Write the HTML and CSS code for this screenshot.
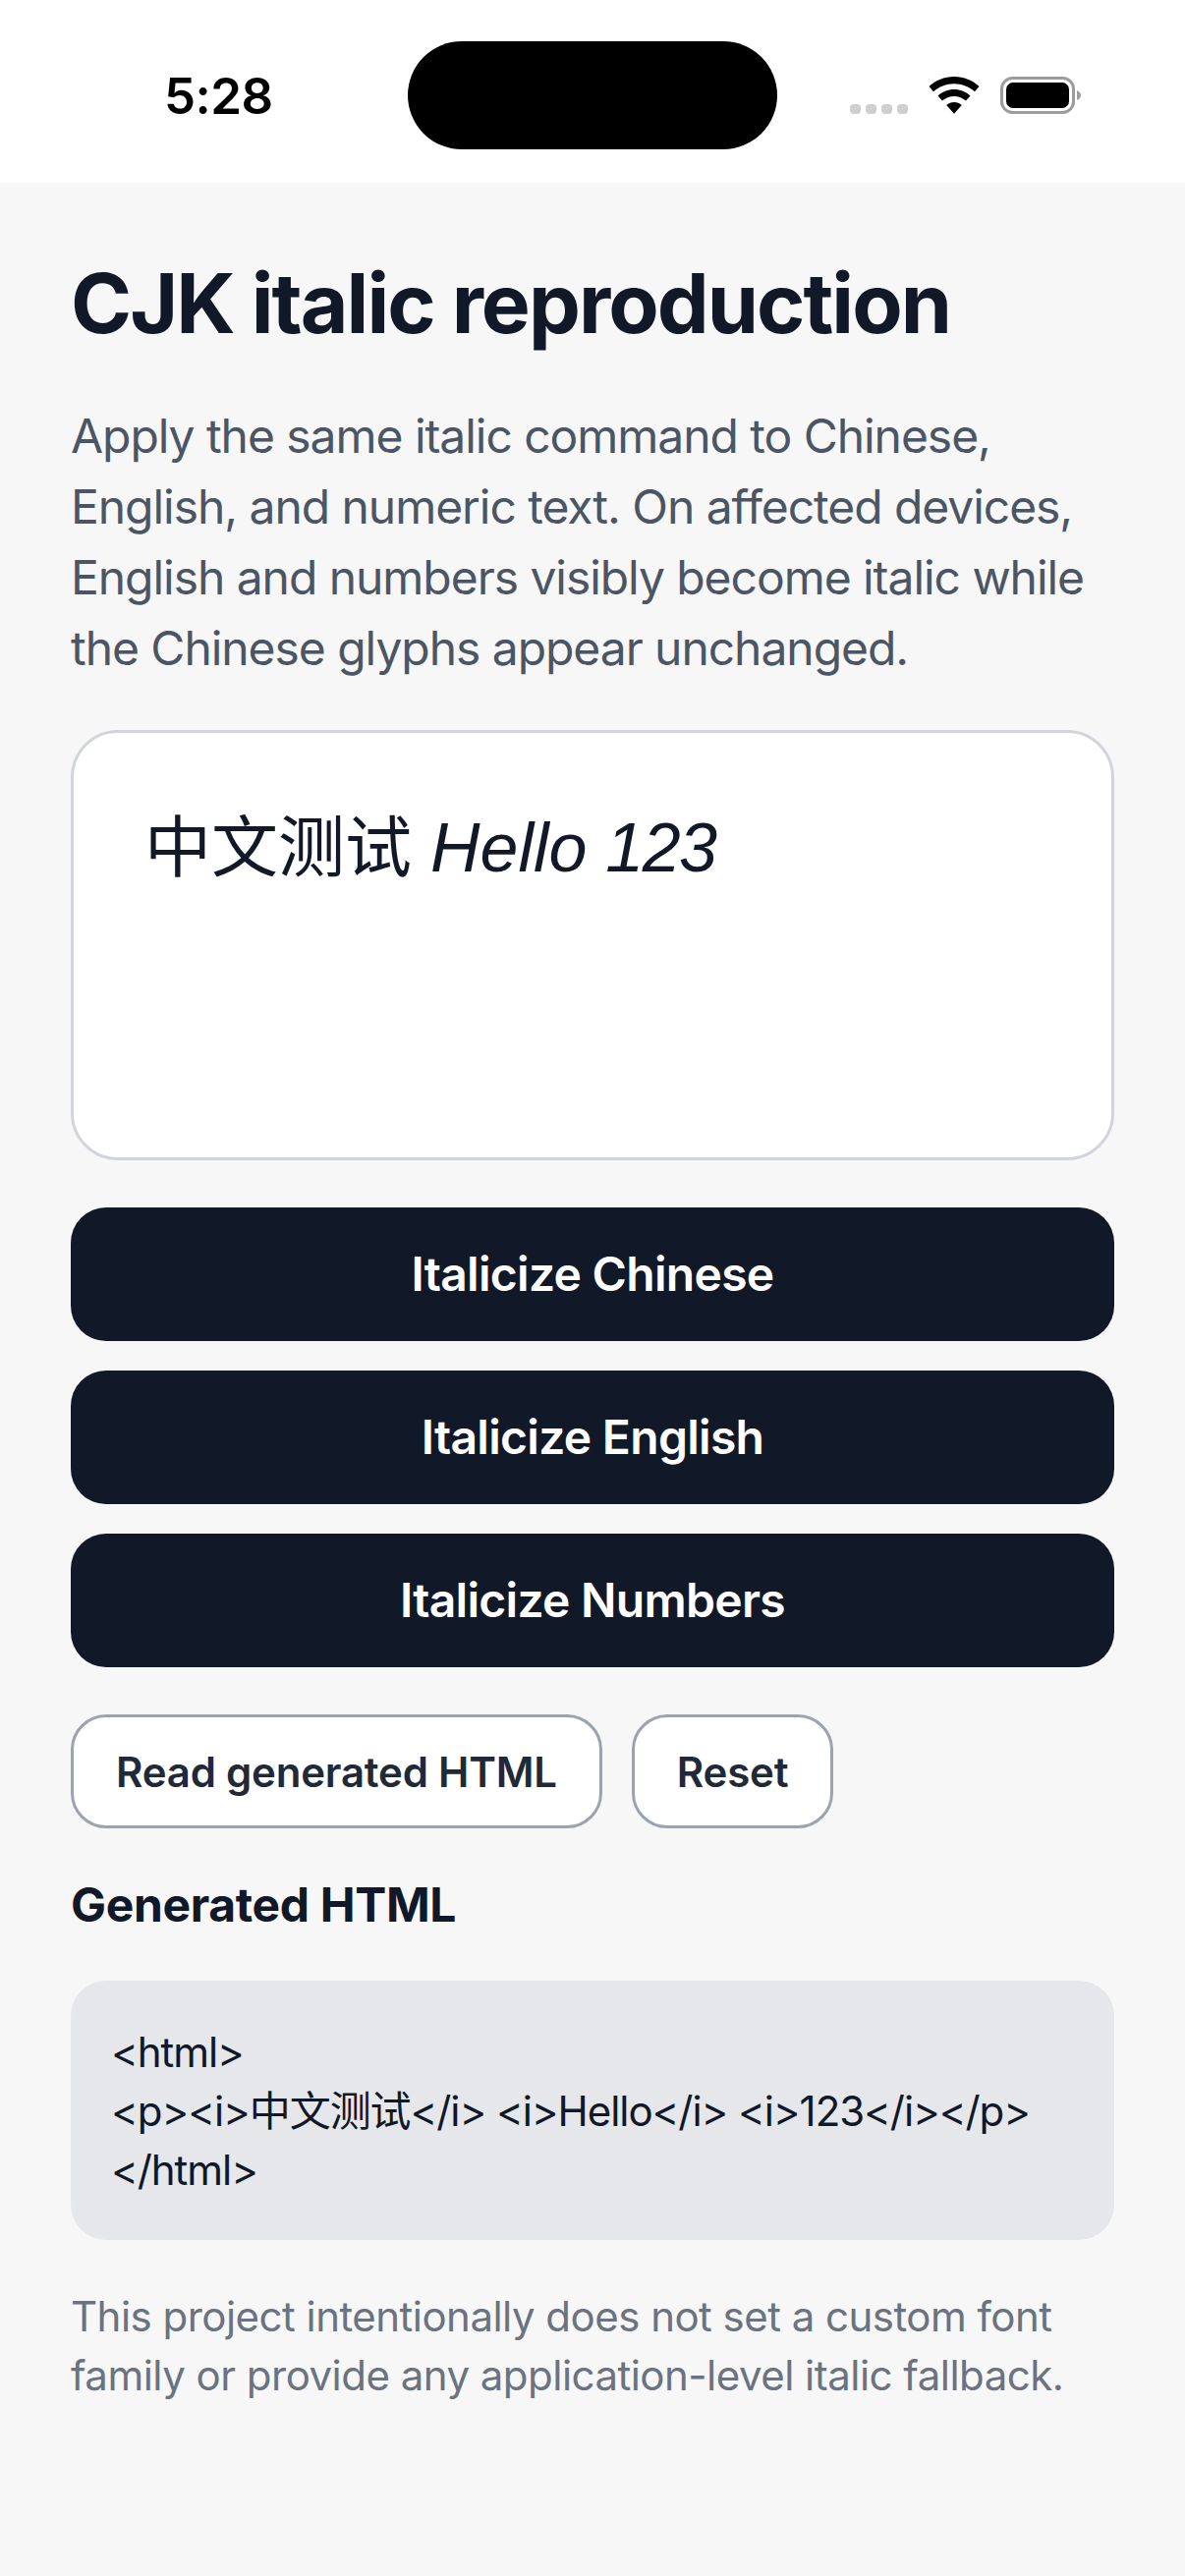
FILE: index.html
```html
<!DOCTYPE html>
<html lang="en">
<head>
<meta charset="utf-8">
<title>CJK italic reproduction</title>
<link rel="stylesheet" href="styles.css">
</head>
<body>
<header class="status-bar">
  <span class="time">5:28</span>
  <div class="island"></div>
  <div class="status-icons">
    <div class="signal"><i></i><i></i><i></i><i></i></div>
    <svg class="wifi" viewBox="0 0 52 38" width="52" height="38"><path d="M26 0C16 0 7.300 3.700 0.500 10L5 15.200C10.500 10.300 18 7.200 26 7.200S41.500 10.300 47 15.200L51.500 10C44.700 3.700 36 0 26 0Z"/><path d="M26 13C19.600 13 13.900 15.400 9.500 19.500L14 24.600C17.200 21.700 21.400 20 26 20S34.800 21.700 38 24.600L42.500 19.500C38.100 15.400 32.400 13 26 13Z"/><path d="M26 26C23 26 20.300 27.100 18.200 29L26 37.700L33.800 29C31.700 27.100 29 26 26 26Z"/></svg>
    <svg class="battery" viewBox="0 0 82 38" width="82" height="38"><rect x="1.500" y="1.500" width="73" height="35" rx="11" fill="none" stroke="#9c9c9c" stroke-width="3"/><rect x="6" y="6" width="64" height="26" rx="7"/><path d="M78 14C80.500 15 82 17 82 19S80.500 23 78 24Z" fill="#9c9c9c"/></svg>
  </div>
</header>
<main class="page">
  <h1 class="title">CJK italic reproduction</h1>
  <p class="intro">Apply the same italic command to Chinese, English, and numeric text. On affected devices, English and numbers visibly become italic while the Chinese glyphs appear unchanged.</p>
  <div class="editor"><span class="cjk">中文测试</span> <em class="slant">Hello</em> <em class="slant digits">123</em></div>
  <div class="actions">
    <button class="btn-primary">Italicize Chinese</button>
    <button class="btn-primary">Italicize English</button>
    <button class="btn-primary">Italicize Numbers</button>
  </div>
  <div class="secondary-row">
    <button class="btn-secondary">Read generated HTML</button>
    <button class="btn-secondary">Reset</button>
  </div>
  <h2 class="section-title">Generated HTML</h2>
  <pre class="code">&lt;html&gt;
&lt;p&gt;&lt;i&gt;中文测试&lt;/i&gt; &lt;i&gt;Hello&lt;/i&gt; &lt;i&gt;123&lt;/i&gt;&lt;/p&gt;
&lt;/html&gt;</pre>
  <p class="note">This project intentionally does not set a custom font family or provide any application-level italic fallback.</p>
</main>
</body>
</html>
```
FILE: styles.css
```css
* { box-sizing: border-box; }
html, body { margin: 0; padding: 0; }
body {
  width: 1206px;
  height: 2622px;
  overflow: hidden;
  background: #f7f7f8;
  color: #111827;
  font-family: Inter, "Noto Sans CJK SC", sans-serif;
}
.status-bar {
  position: relative;
  height: 186px;
  background: #fff;
  display: flex;
  align-items: center;
  justify-content: space-between;
  padding: 0 106px 0 167px;
}
.time {
  font-size: 51px;
  font-weight: 600;
  letter-spacing: -0.5px;
  color: #000;
  line-height: 1;
  margin-top: 8px;
}
.island {
  position: absolute;
  left: 415px;
  top: 42px;
  width: 376px;
  height: 110px;
  border-radius: 55px;
  background: #000;
}
.status-icons { display: flex; align-items: flex-end; gap: 21px; margin-top: 8px; }
.signal { display: flex; gap: 5px; }
.signal i { width: 11px; height: 10px; border-radius: 4px; background: #cfcfcf; }
.wifi, .battery { display: block; }
.page { padding: 72px 72px 0; }
.title {
  margin: 0;
  font-size: 84px;
  line-height: 102px;
  font-weight: 700;
  letter-spacing: -1.95px;
}
.intro {
  margin: 48px 0 0;
  font-size: 48px;
  line-height: 72px;
  letter-spacing: -1.05px;
  color: #4b5563;
}
.editor {
  margin-top: 47px;
  height: 438px;
  background: #fff;
  border: 3px solid #d1d5db;
  border-radius: 48px;
  padding: 72px 72px 0;
  font-size: 68px;
  line-height: 80px;
  font-family: "Liberation Sans", "Noto Sans CJK SC", sans-serif;
}
.cjk { font-family: "Noto Sans CJK SC", sans-serif; font-weight: 400; }
.slant { font-style: italic; font-size: 70px; }
.digits { letter-spacing: -1.6px; }
.actions { margin-top: 48px; display: flex; flex-direction: column; gap: 30px; }
.btn-primary {
  height: 136px;
  border: 0;
  border-radius: 36px;
  background: #111827;
  color: #fff;
  font: 600 48px Inter, sans-serif;
  letter-spacing: -0.7px;
  padding: 0 0 2px;
}
.secondary-row { margin-top: 48px; display: flex; gap: 30px; }
.btn-secondary {
  height: 116px;
  padding: 0 43px;
  border: 3px solid #9ca3af;
  border-radius: 36px;
  background: #fff;
  color: #1f2937;
  font: 600 42px Inter, sans-serif;
  letter-spacing: -0.2px;
}
.section-title {
  margin: 42px 0 0;
  font-size: 48px;
  line-height: 72px;
  font-weight: 700;
  letter-spacing: -0.35px;
}
.code {
  margin: 41px 0 0;
  padding: 43px 42px 41px 41px;
  height: 264px;
  background: #e5e7eb;
  border-radius: 36px;
  font: 400 42px/60px Inter, "Noto Sans CJK SC", sans-serif;
  letter-spacing: -1.05px;
  white-space: pre;
}
.note {
  margin: 48px 0 0;
  font-size: 42px;
  line-height: 60px;
  letter-spacing: -0.52px;
  color: #6b7280;
}
```
